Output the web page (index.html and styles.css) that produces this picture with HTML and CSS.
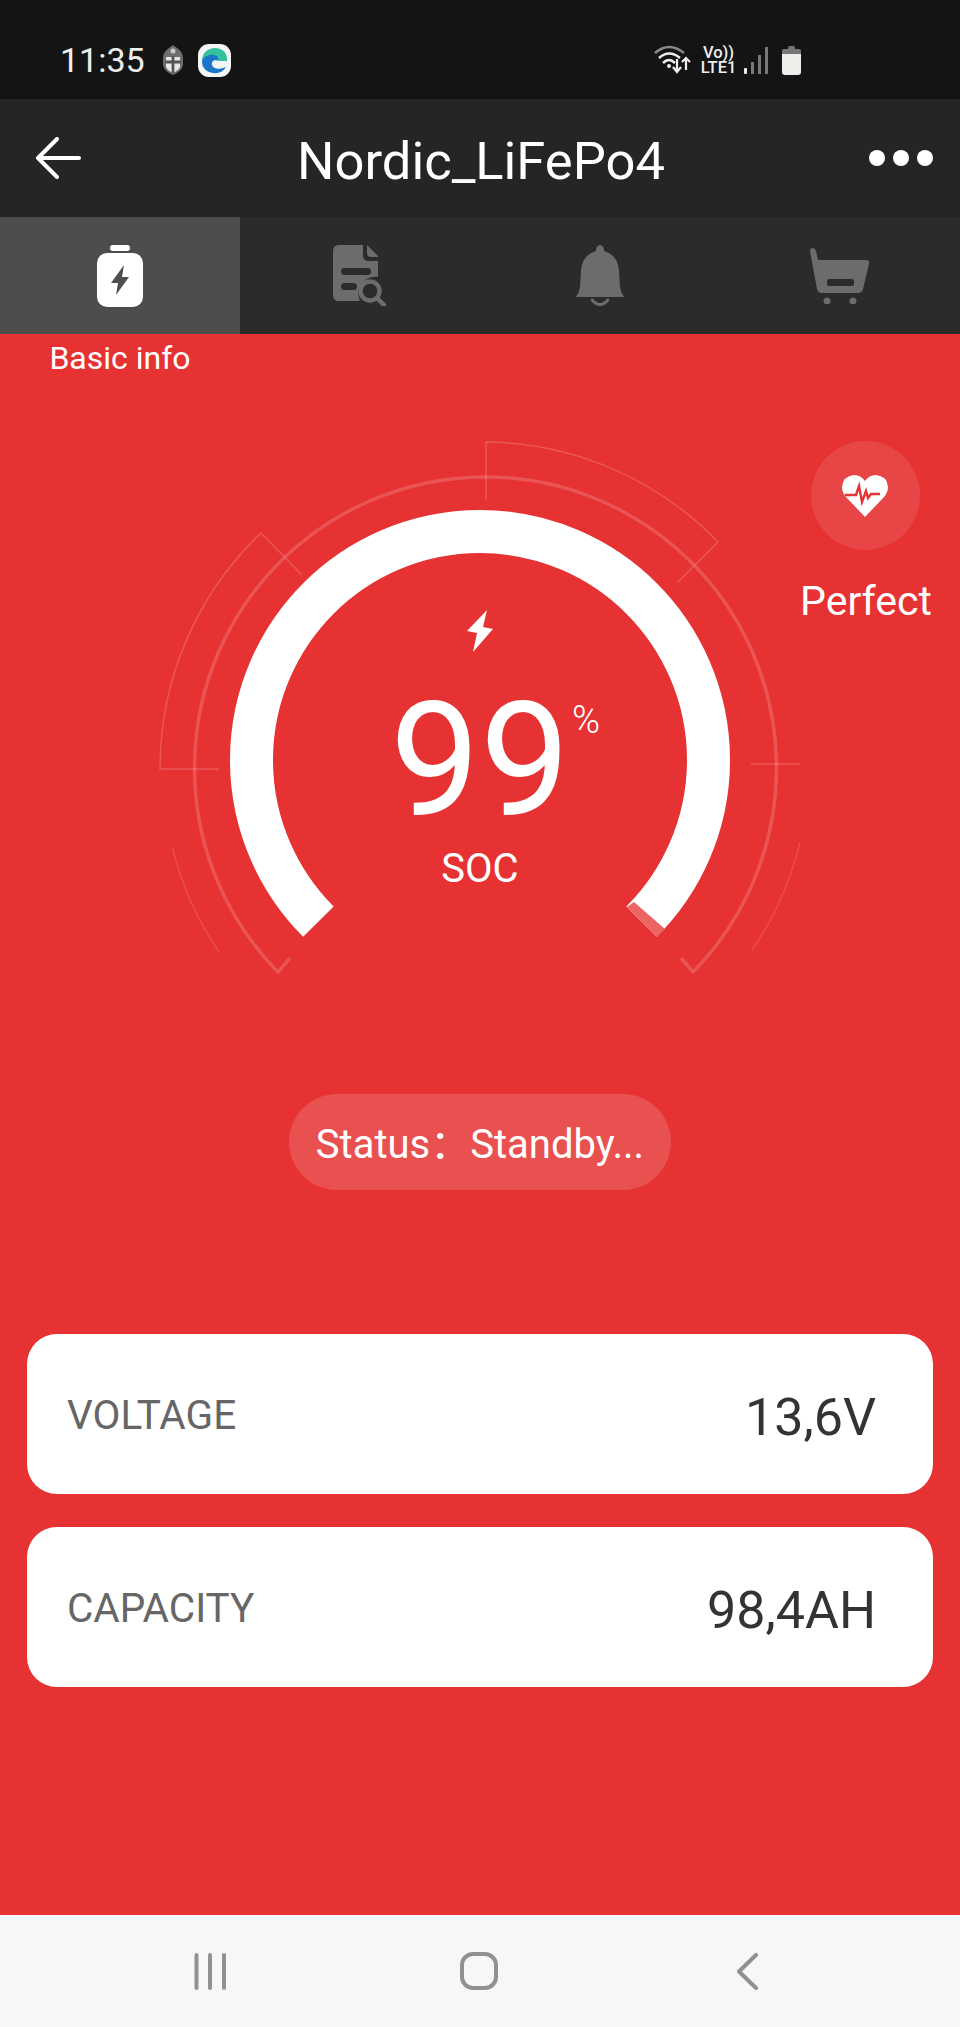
FILE: index.html
```html
<!DOCTYPE html>
<html lang="en">
<head>
    <meta charset="UTF-8">
    <meta name="viewport" content="width=device-width, initial-scale=1.0">
    <title>Nordic_LiFePo4</title>
    <link rel="stylesheet" href="styles.css">
</head>
<body>

<div class="statusbar">
    <div class="status-left">
        <span class="clock">11:35</span>
        <svg class="shield" viewBox="0 0 20 30">
            <path d="M10 0 L14 3 Q20 7 20 13 L20 20 Q19 26 10 30 Q1 26 0 20 L0 13 Q0 7 6 3 Z" fill="#6e6e6e"/>
            <path d="M3 12 H17 V22 Q16 25 10 28 Q4 25 3 22 Z" fill="#e8e8e8"/>
            <path d="M8.6 11 H11.4 V28 H8.6 Z M2 15.5 H18 V18.5 H2 Z" fill="#555"/>
            <circle cx="10" cy="6" r="2.5" fill="#c8c8c8"/>
        </svg>
        <svg class="edge" viewBox="0 0 33 33">
            <rect width="33" height="33" rx="11" fill="#f4f6f6"/>
            <path d="M4 17 C4 9 10 4 17 4 C24 4 30 9 29 17 L20 17 C20 13 17 11 14 12 C9 13 6 14 4 17Z" fill="#35c1a0"/>
            <path d="M4 17 C6 12 12 10 16 11 C20 12 21 14 20 17 C17 15 13 17 14 21 C15 25 21 26 28 23 C25 28 20 30 15 29 C8 28 4 24 4 17Z" fill="#1a76c9"/>
            <path d="M17 18 C17 16 20 16 21 17.5 C22 19 25 18.5 29 17 C29 20 27 22.5 23 23 C19 23.5 16.5 21 17 18Z" fill="#f4f6f6"/>
        </svg>
    </div>
    <div class="status-right">
        <svg class="wifi" viewBox="0 0 38 32">
            <path d="M2 9 Q16 -3 31 9" stroke="#8a8a8a" stroke-width="2.5" fill="none"/>
            <path d="M6 14 Q16 5 27 14" stroke="#eee" stroke-width="2.5" fill="none"/>
            <path d="M10 19 Q16 13 22 19" stroke="#eee" stroke-width="2.5" fill="none"/>
            <circle cx="16" cy="22" r="2" fill="#eee"/>
            <path d="M24 15 V28 M20 23 L24 28 L28 23" stroke="#eee" stroke-width="2.2" fill="none"/>
            <path d="M33 26 V14 M29 18 L33 14 L37 18" stroke="#eee" stroke-width="2.2" fill="none"/>
        </svg>
        <div class="lte"><span>Vo))</span><span>LTE1</span></div>
        <svg class="signal" viewBox="0 0 25 27">
            <rect x="0" y="21" width="3" height="6" rx="1" fill="#eee"/>
            <rect x="7" y="15" width="3" height="12" fill="#777"/>
            <rect x="14" y="8" width="3" height="19" fill="#777"/>
            <rect x="21" y="0" width="3" height="27" fill="#777"/>
        </svg>
        <svg class="batt" viewBox="0 0 19 29">
            <path d="M6 2 Q6 0 8 0 H11 Q13 0 13 2 V4 H6 Z" fill="#777"/>
            <rect x="0" y="3" width="19" height="6" rx="2" fill="#777"/>
            <path d="M0 8 H19 V26 Q19 29 16 29 H3 Q0 29 0 26 Z" fill="#eeeeea"/>
        </svg>
    </div>
</div>

<header class="appbar">
    <svg class="back" viewBox="0 0 46 42">
        <path d="M44 21 H3 M22 2 L3 21 L22 40" stroke="#fff" stroke-width="4" stroke-linecap="round" stroke-linejoin="round" fill="none"/>
    </svg>
    <h1 class="title">Nordic_LiFePo4</h1>
    <div class="dots"><i></i><i></i><i></i></div>
</header>

<nav class="tabs">
    <div class="tab active">
        <svg viewBox="0 0 46 62" width="46" height="62">
            <rect x="13" y="0" width="20" height="6" rx="3" fill="#fff"/>
            <rect x="0" y="8" width="46" height="54" rx="10" fill="#fff"/>
            <path d="M27 20 L14 38 H21 L19 50 L32 32 H25 Z" fill="#4d4d4d"/>
        </svg>
    </div>
    <div class="tab">
        <svg viewBox="0 0 54 61" width="54" height="61">
            <path d="M6 0 H30 V10 Q30 16 36 16 H45 V32 A17 17 0 0 0 27 56 H6 Q0 56 0 50 V6 Q0 0 6 0 Z" fill="#6c6c6c"/>
            <path d="M34 0 L45 11 V12 H38 Q34 12 34 8 Z" fill="#6c6c6c"/>
            <rect x="8" y="23" width="30" height="7" rx="3.5" fill="#2b2b2b"/>
            <rect x="8" y="38" width="16" height="7" rx="3.5" fill="#2b2b2b"/>
            <circle cx="37" cy="46" r="9.5" fill="none" stroke="#6c6c6c" stroke-width="4.5"/>
            <path d="M44 53 L51 60" stroke="#6c6c6c" stroke-width="4.5" stroke-linecap="round"/>
        </svg>
    </div>
    <div class="tab">
        <svg viewBox="0 0 48 61" width="48" height="61">
            <path d="M20 6 Q20 0 24 0 Q28 0 28 6 Q42 10 43 26 L44 42 Q45 48 48 52 H0 Q3 48 4 42 L5 26 Q6 10 20 6 Z" fill="#6c6c6c"/>
            <path d="M16 55 Q24 64 32 55" stroke="#6c6c6c" stroke-width="3" fill="none" stroke-linecap="round"/>
        </svg>
    </div>
    <div class="tab">
        <svg viewBox="0 0 60 56" width="60" height="56">
            <path d="M0 3 Q0 0 3 0 Q5 0 6 3 L8 12 H56 Q60 12 59 16 L53 41 Q52 45 48 45 H12 Q8 45 7 41 Z" fill="#6c6c6c"/>
            <rect x="17" y="31" width="27" height="7" rx="2.5" fill="#2b2b2b"/>
            <circle cx="17" cy="53" r="3.5" fill="#6c6c6c"/>
            <circle cx="43" cy="53" r="3.5" fill="#6c6c6c"/>
        </svg>
    </div>
</nav>

<main class="content">
    <div class="tab-label">Basic info</div>

    <section class="gauge-area">
        <!-- drawn in page coords minus 334 top -->
        <svg class="gauge" viewBox="0 0 960 680" width="960" height="680">
            <g transform="translate(0,-334)" fill="none" stroke="#fff">
                <!-- thick ring -->
                <path d="M318.4 921.6 A228.5 228.5 0 1 1 641.6 921.6" stroke-width="43"/>
                <path d="M627 907 L657 937 L665 929 L634 902 Z" fill="#ed6464" stroke="none"/>
                <!-- thin ring + chevrons -->
                <path d="M290 958 L278 972 A291 291 0 1 1 693 972 L681 958" stroke-width="3.5" stroke-opacity=".17"/>
                <!-- top segments -->
                <path d="M486 500 V442 A326 326 0 0 1 718 542 L678 582" stroke-width="1.5" stroke-opacity=".18"/>
                <path d="M302 575 L261 533 A325 325 0 0 0 160 769 H219" stroke-width="1.5" stroke-opacity=".18"/>
                <path d="M751 764 H800" stroke-width="1.5" stroke-opacity=".18"/>
                <!-- bottom faint arcs -->
                <path d="M172.5 848 A323 323 0 0 0 219 952" stroke-width="1.5" stroke-opacity=".13"/>
                <path d="M800 842 A323 323 0 0 1 752 950" stroke-width="1.5" stroke-opacity=".13"/>
                <!-- bolt -->
                <path d="M487 610 L467 631 L477 633 L473 652 L493 629 L483 627 Z" fill="#fff" stroke="none"/>
            </g>
        </svg>

        <div class="reading">
            <span class="num">99</span><span class="pct">%</span>
        </div>
        <div class="soc">SOC</div>

        <div class="health">
            <div class="health-dot">
                <svg viewBox="0 0 46 42" width="46" height="42">
                    <path d="M23 42 L4 22 Q0 17 0 12 Q1 1 12 0 Q19 0 23 6 Q27 0 34 0 Q45 1 46 12 Q46 17 42 22 Z" fill="#fff"/>
                    <path d="M3 20 H11 L14 20 L17 11 L20 27 L24 16 L26 23 L29 19 H38" stroke="#e73333" stroke-width="2.4" fill="none"/>
                </svg>
            </div>
            <div class="health-text">Perfect</div>
        </div>
    </section>

    <div class="status-pill">Status：Standby...</div>

    <div class="cards">
        <div class="card">
            <span class="card-label">VOLTAGE</span>
            <span class="card-value">13,6V</span>
        </div>
        <div class="card">
            <span class="card-label">CAPACITY</span>
            <span class="card-value">98,4AH</span>
        </div>
    </div>
</main>

<footer class="navbar">
    <svg width="32" height="37" viewBox="0 0 32 37">
        <path d="M2.5 2 V35 M16 2 V35 M30 2 V35" stroke="#919191" stroke-width="4" stroke-linecap="round"/>
    </svg>
    <svg class="nav-home" width="38" height="38" viewBox="0 0 38 38">
        <rect x="2" y="2" width="34" height="34" rx="11" fill="none" stroke="#919191" stroke-width="4"/>
    </svg>
    <svg width="21" height="37" viewBox="0 0 21 37">
        <path d="M19 2 L2 18.5 L19 35" stroke="#919191" stroke-width="4" stroke-linecap="round" stroke-linejoin="round" fill="none"/>
    </svg>
</footer>

</body>
</html>
```

FILE: styles.css
```css
/* Page */
* {
    box-sizing: border-box;
}

body {
    margin: 0;
    width: 960px;
    height: 2027px;
    display: flex;
    flex-direction: column;
    font-family: Roboto, "Noto Sans CJK SC", sans-serif;
    background: #e63232;
    overflow: hidden;
}

/* Status bar */
.statusbar {
    height: 99px;
    background: #141414;
    display: flex;
    justify-content: space-between;
    align-items: center;
    padding: 21px 159px 0 60px;
    color: #eee;
}

.status-left, .status-right {
    display: flex;
    align-items: center;
}

.clock {
    font-size: 34px;
    width: 103px;
}

.shield {
    width: 20px;
    height: 30px;
    margin-right: 15px;
}

.edge {
    width: 33px;
    height: 33px;
}

.wifi {
    width: 38px;
    height: 32px;
    margin-right: 10px;
}

.lte {
    display: flex;
    flex-direction: column;
    align-items: center;
    font-size: 16.5px;
    font-weight: 500;
    line-height: 15px;
    width: 35px;
    margin-right: 8px;
}

.signal {
    width: 25px;
    height: 27px;
    margin-right: 13px;
}

.batt {
    width: 19px;
    height: 29px;
}

/* App bar */
.appbar {
    height: 118px;
    background: #252525;
    display: grid;
    grid-template-columns: 1fr auto 1fr;
    align-items: center;
    padding: 0 27px 0 35px;
}

.back {
    width: 46px;
    height: 42px;
}

.title {
    margin: 6px 6px 0 0;
    font-size: 52.5px;
    font-weight: 400;
    color: #fff;
}

.dots {
    display: flex;
    justify-content: flex-end;
    gap: 8px;
}

.dots i {
    width: 16px;
    height: 16px;
    border-radius: 50%;
    background: #fff;
}

/* Tabs */
.tabs {
    height: 117px;
    background: #2b2b2b;
    display: grid;
    grid-template-columns: repeat(4, 240px);
}

.tab {
    display: flex;
    justify-content: center;
    align-items: center;
}

.tab.active {
    background: #4d4d4d;
}

/* Main red part */
.content {
    flex: 1;
    display: flex;
    flex-direction: column;
    color: #fff;
}

.tab-label {
    width: 240px;
    text-align: center;
    font-size: 32px;
    line-height: 48px;
}

.gauge-area {
    height: 712px;
}

.gauge {
    position: absolute;
    top: 334px;
    left: 0;
}

.reading {
    position: absolute;
    top: 691px;
    left: 0;
    width: 960px;
    text-align: center;
    line-height: 140px;
}

.num {
    font-size: 160px;
    font-weight: 400;
}

.pct {
    position: absolute;
    top: -41px;
    left: 572px;
    font-size: 38px;
    font-weight: 300;
}

.soc {
    position: absolute;
    top: 845px;
    left: 0;
    width: 960px;
    text-align: center;
    font-size: 40px;
}

.health {
    position: absolute;
    top: 441px;
    left: 796px;
    width: 140px;
    display: flex;
    flex-direction: column;
    align-items: center;
}

.health-dot {
    width: 109px;
    height: 109px;
    margin-right: 2px;
    border-radius: 50%;
    background: rgba(255, 255, 255, 0.1);
    display: flex;
    justify-content: center;
    align-items: center;
}

.health-text {
    margin-top: 27px;
    font-size: 41px;
}

/* Status pill */
.status-pill {
    align-self: center;
    width: 382px;
    height: 96px;
    padding-bottom: 2px;
    border-radius: 48px;
    background: rgba(255, 255, 255, 0.15);
    display: flex;
    justify-content: center;
    align-items: center;
    font-size: 40px;
    white-space: nowrap;
}

/* Cards */
.cards {
    margin-top: 144px;
    padding: 0 27px;
    display: flex;
    flex-direction: column;
    gap: 33px;
}

.card {
    height: 160px;
    background: #fff;
    border-radius: 30px;
    display: flex;
    justify-content: space-between;
    align-items: center;
    padding: 7px 57px 0 40px;
}

.card-label {
    margin-bottom: 5px;
    font-size: 40.5px;
    color: #666;
}

.card-value {
    font-size: 52px;
    color: #333;
}

/* Android nav */
.navbar {
    height: 112px;
    background: #f7f7f7;
    display: flex;
    justify-content: space-between;
    align-items: center;
    padding: 0 202px 0 194px;
}

.nav-home {
    margin-right: 6px;
}
```
